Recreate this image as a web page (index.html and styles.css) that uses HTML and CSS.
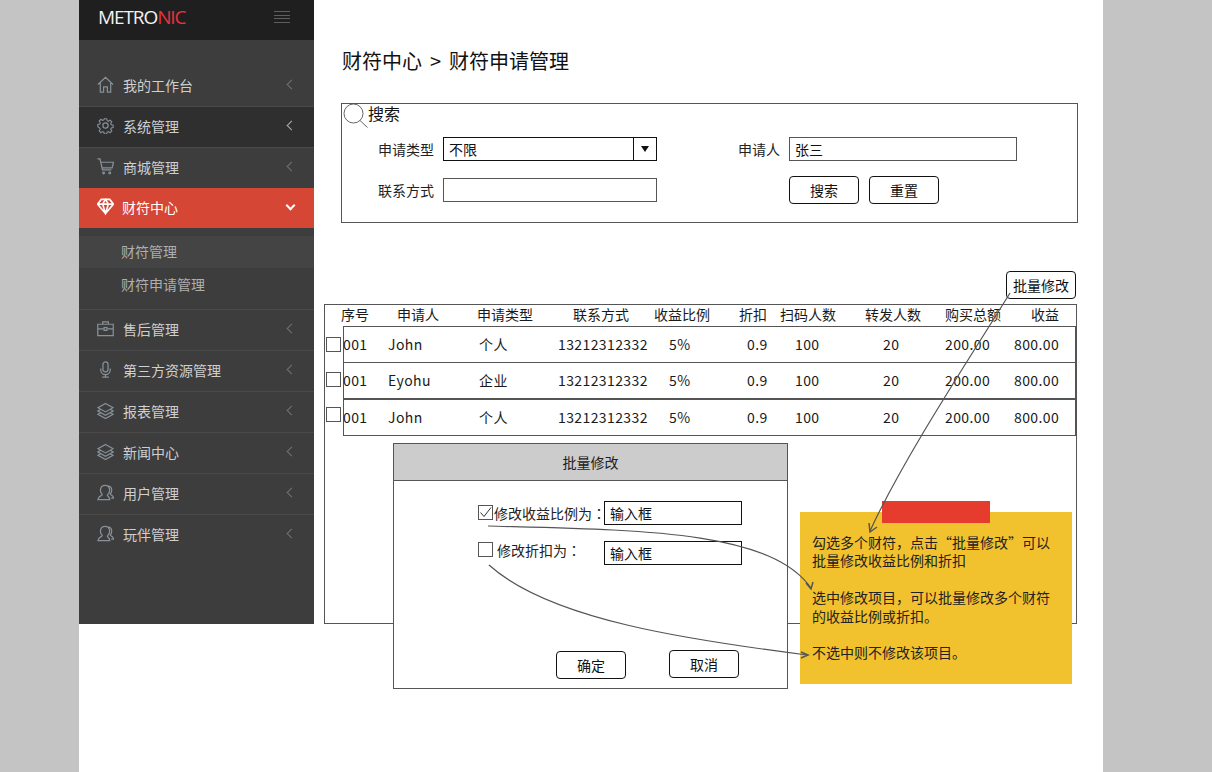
FILE: index.html
```html
<!DOCTYPE html>
<html>

<head>
    <title>财符申请管理</title>
    <meta charset="UTF-8" />
    <link rel="stylesheet" href="styles.css">
</head>

<body>
    <svg class="defs" width="0" height="0">
        <symbol id="i-home" viewBox="0 0 18 18"><path d="M1 9 9 1.500 17 9M3.500 7.500V17H7v-5.500h4V17h3.500V7.500"/></symbol>
        <symbol id="i-gear" viewBox="0 0 18 18"><circle cx="9" cy="9" r="2.800"/><path d="M7.600 1h2.800l.5 2.300 1.500.7 2-1.300 2 2-1.300 2 .7 1.500 2.200.5v2.800l-2.200.5-.7 1.500 1.300 2-2 2-2-1.300-1.500.7-.5 2.200H7.600l-.5-2.200-1.500-.7-2 1.300-2-2 1.300-2-.7-1.500L0 10.500V7.700l2.200-.5.7-1.500-1.300-2 2-2 2 1.300 1.500-.7z" transform="translate(.9 .9) scale(.9)"/></symbol>
        <symbol id="i-cart" viewBox="0 0 18 18"><path d="M.5 1h2.700l2.600 11.500h9.400M4 4.500h13.500l-1.500 6H5.300"/><circle cx="7" cy="15.800" r=".9"/><circle cx="13.500" cy="15.800" r=".9"/></symbol>
        <symbol id="i-gem" viewBox="0 0 18 18"><path d="M4.500 1.500h9L17.500 6.500 9 16.500.5 6.500zM.5 6.500h17M6 6.500 9 16.500 12 6.500 9 1.500z"/></symbol>
        <symbol id="i-case" viewBox="0 0 18 18"><path d="M.8 4.500h16.400v12H.8zM6 4.500V2h6v2.500M.8 9.500H7M11 9.500h6.200"/><rect x="7.500" y="8" width="3" height="3"/></symbol>
        <symbol id="i-mic" viewBox="0 0 18 18"><rect x="6.300" y="1" width="5.400" height="10.500" rx="2.700"/><path d="M4 8v1.500a5 5 0 0 0 10 0V8M9 14.500V17M5.500 17h7"/></symbol>
        <symbol id="i-layers" viewBox="0 0 18 18"><path d="M9 1.500 17 6 9 10.500 1 6zM3.500 8 1 9.500 9 14l8-4.500L14.500 8M3.500 11.500 1 13l8 4.500 8-4.500-2.500-1.500"/></symbol>
        <symbol id="i-user" viewBox="0 0 18 18"><path d="M11.500 11c3-3 2.500-9.500-3-9.500S2.500 8 5.500 11c0 1.500-4.500 2-4.500 5.500h12.500c0-3.500-4-4-2-5.500zM12 2c4 .5 4.500 6 2 8.500 0 1 3.500 2 3.500 4.500H15"/></symbol>
    </svg>

    <div class="page">
        <aside class="sidebar">
            <div class="brand">
                <span class="logo">METRO<em>NIC</em></span>
                <svg class="burger" width="16" height="14" viewBox="0 0 16 14"><path d="M0 1.500h16M0 5.500h16M0 8.500h16M0 12.500h16"/></svg>
            </div>
            <ul class="menu">
                <li class="item"><svg class="icon"><use href="#i-home"/></svg>我的工作台<i class="chev"></i></li>
                <li class="item item-dark"><svg class="icon"><use href="#i-gear"/></svg>系统管理<i class="chev chev-bright"></i></li>
                <li class="item item-flat"><svg class="icon"><use href="#i-cart"/></svg>商城管理<i class="chev"></i></li>
                <li class="item item-active"><svg class="icon"><use href="#i-gem"/></svg>财符中心<i class="chev chev-down"></i></li>
                <li class="sub">
                    <div class="sub-item sub-current">财符管理</div>
                    <div class="sub-item">财符申请管理</div>
                </li>
                <li class="item"><svg class="icon"><use href="#i-case"/></svg>售后管理<i class="chev"></i></li>
                <li class="item"><svg class="icon"><use href="#i-mic"/></svg>第三方资源管理<i class="chev"></i></li>
                <li class="item"><svg class="icon"><use href="#i-layers"/></svg>报表管理<i class="chev"></i></li>
                <li class="item"><svg class="icon"><use href="#i-layers"/></svg>新闻中心<i class="chev"></i></li>
                <li class="item"><svg class="icon"><use href="#i-user"/></svg>用户管理<i class="chev"></i></li>
                <li class="item item-flat"><svg class="icon"><use href="#i-user"/></svg>玩伴管理<i class="chev"></i></li>
            </ul>
        </aside>

        <main class="main">
            <h1>财符中心 &gt; 财符申请管理</h1>

            <section class="search">
                <div class="search-title">
                    <svg width="25" height="24" viewBox="0 0 25 24"><circle cx="10.500" cy="9.500" r="9.500"/><path d="M17 16.500 24.500 23.500"/></svg>
                    <span>搜索</span>
                </div>
                <div class="form-row">
                    <label class="label">申请类型</label>
                    <div class="field field-dark select">
                        <span>不限</span>
                        <b class="select-btn"></b>
                    </div>
                    <label class="label label-short">申请人</label>
                    <div class="field field-wide">张三</div>
                </div>
                <div class="form-row form-row-last">
                    <label class="label">联系方式</label>
                    <div class="field"></div>
                    <div class="actions">
                        <button class="btn">搜索</button>
                        <button class="btn">重置</button>
                    </div>
                </div>
            </section>

            <button class="btn btn-batch">批量修改</button>

            <section class="table">
                <div class="grid grid-head">
                    <span>序号</span><span>申请人</span><span>申请类型</span><span>联系方式</span><span>收益比例</span>
                    <span>折扣</span><span>扫码人数</span><span>转发人数</span><span>购买总额</span><span>收益</span>
                </div>
                <div class="row row-first">
                    <i class="check"></i>
                    <div class="grid grid-body">
                        <span>001</span><span>John</span><span>个人</span><span>13212312332</span><span>5%</span>
                        <span>0.9</span><span>100</span><span>20</span><span>200.00</span><span>800.00</span>
                    </div>
                </div>
                <div class="row row-second">
                    <i class="check"></i>
                    <div class="grid grid-body">
                        <span>001</span><span>Eyohu</span><span>企业</span><span>13212312332</span><span>5%</span>
                        <span>0.9</span><span>100</span><span>20</span><span>200.00</span><span>800.00</span>
                    </div>
                </div>
                <div class="row row-third">
                    <i class="check"></i>
                    <div class="grid grid-body">
                        <span>001</span><span>John</span><span>个人</span><span>13212312332</span><span>5%</span>
                        <span>0.9</span><span>100</span><span>20</span><span>200.00</span><span>800.00</span>
                    </div>
                </div>
            </section>
        </main>

        <!-- dialog and note sit over the table -->
        <div class="dialog">
            <div class="dialog-head">批量修改</div>
            <div class="dialog-body">
                <div class="dialog-row">
                    <i class="check check-on">
                        <svg width="13" height="13" viewBox="0 0 13 13"><path d="M1.500 6.500 5 10.500 12 1.500"/></svg>
                    </i>
                    <span class="dialog-label">修改收益比例为<span class="colon">：</span></span>
                    <div class="field field-dark field-input">输入框</div>
                </div>
                <div class="dialog-row dialog-row-off">
                    <i class="check"></i>
                    <span class="dialog-label">修改折扣为<span class="colon">：</span></span>
                    <div class="field field-dark field-input">输入框</div>
                </div>
                <div class="dialog-actions">
                    <button class="btn btn-ok">确定</button>
                    <button class="btn">取消</button>
                </div>
            </div>
        </div>

        <div class="note">
            <p>勾选多个财符，点击“批量修改”可以批量修改收益比例和折扣</p>
            <p>选中修改项目，可以批量修改多个财符的收益比例或折扣。</p>
            <p>不选中则不修改该项目。</p>
        </div>
        <div class="note-tag"></div>

        <svg class="arrows" width="1024" height="772" viewBox="79 0 1024 772">
            <path d="M1010 293C975 350 905 455 870 531"/>
            <path class="head" d="M869 523 870 532 877 527"/>
            <path d="M488 526C640 530 770 530 811 588"/>
            <path class="head" d="M806 583 811 589 813 582"/>
            <path d="M489 565C550 620 690 640 807 655"/>
            <path class="head" d="M801 652 808 655 801 658"/>
        </svg>
    </div>
</body>

</html>
```

FILE: styles.css
```css
* {
    box-sizing: border-box;
}

html,
body {
    margin: 0;
    padding: 0;
    height: 100%;
    overflow: hidden;
}

body {
    background-color: #c4c4c4;
    font-family: "Noto Sans CJK SC", "Open Sans", sans-serif;
    font-size: 14px;
    color: #222;
}

.defs {
    position: absolute;
}

.page {
    position: relative;
    display: flex;
    align-items: flex-start;
    width: 1024px;
    height: 772px;
    margin-left: 79px;
    background-color: #fff;
}

/* sidebar */
.sidebar {
    flex: none;
    width: 235px;
    height: 624px;
    background-color: #3d3d3d;
}

.brand {
    display: flex;
    justify-content: space-between;
    align-items: center;
    height: 40px;
    padding: 0 24px 6px 19px;
    background-color: #1f1f1f;
}

.logo {
    font-family: "Open Sans", sans-serif;
    font-size: 19px;
    letter-spacing: -1.1px;
    color: #f2f2f2;
}

.logo em {
    font-style: normal;
    color: #e8323c;
}

.burger path {
    fill: none;
    stroke: #5e5e5e;
}

.menu {
    list-style: none;
    margin: 26px 0 0;
    padding: 0;
}

.item {
    display: flex;
    align-items: center;
    height: 41px;
    padding: 0 19px 3px 18px;
    border-bottom: 1px solid #4a4a4a;
    color: #cfcfcf;
}

.item-dark {
    background-color: #2f2f2f;
}

.item-flat {
    height: 40px;
    border-bottom: none;
}

.item-active {
    height: 40px;
    border-bottom: none;
    background-color: #d64635;
    color: #fff;
}

.icon {
    flex: none;
    width: 17px;
    height: 17px;
    margin-right: 9px;
    fill: none;
    stroke: #87919a;
    stroke-width: 1.3;
}

.item-active .icon {
    margin-right: 8px;
    stroke: #fff;
    stroke-width: 1.7;
}

.chev {
    width: 7px;
    height: 7px;
    margin-left: auto;
    border-left: 1px solid #6d747a;
    border-bottom: 1px solid #6d747a;
    transform: rotate(45deg);
}

.chev-bright {
    border-color: #a9b0b6;
}

.chev-down {
    margin: -3px 1px 0 auto;
    border-width: 2px;
    border-color: #fff;
    transform: rotate(-45deg);
}

.sub {
    height: 82px;
    padding-top: 8px;
    border-bottom: 1px solid #4a4a4a;
    color: #aeaeae;
}

.sub-item {
    height: 33px;
    padding-left: 42px;
    line-height: 32px;
}

.sub-current {
    height: 32px;
    background-color: #444;
    line-height: 30px;
}

/* main */
.main {
    display: flex;
    flex-direction: column;
    flex: 1;
    min-width: 0;
}

h1 {
    margin: 46px 0 0 28px;
    font-size: 20px;
    font-weight: normal;
    line-height: 30px;
    word-spacing: 3.5px;
    color: #111;
}

.search {
    width: 737px;
    height: 120px;
    margin: 27px 0 0 27px;
    border: 1px solid #555;
}

.search-title {
    display: flex;
    height: 24px;
    padding-left: 1px;
    font-size: 16px;
    line-height: 19px;
    color: #111;
}

.search-title svg {
    flex: none;
    fill: none;
    stroke: #666;
}

.form-row {
    display: flex;
    align-items: center;
    height: 24px;
    margin-top: 9px;
    padding-left: 36px;
}

.form-row-last {
    margin-top: 17px;
}

.label {
    flex: none;
    width: 55px;
    margin-right: 10px;
    white-space: nowrap;
}

.label-short {
    width: 41px;
    margin-left: 81px;
}

.field {
    flex: none;
    width: 214px;
    height: 24px;
    padding-left: 5px;
    border: 1px solid #555;
    background-color: #fff;
    line-height: 23px;
    color: #111;
}

.field-dark {
    border-color: #111;
}

.field-wide {
    width: 228px;
}

.field-input {
    width: 138px;
}

.select {
    display: flex;
    justify-content: space-between;
    padding-right: 0;
}

.select-btn {
    position: relative;
    width: 23px;
    border-left: 1px solid #111;
}

.select-btn::after {
    content: "";
    position: absolute;
    top: 8px;
    left: 7px;
    border: 4px solid transparent;
    border-top: 6px solid #111;
    border-bottom: none;
}

.actions {
    display: flex;
    gap: 10px;
    margin-left: 132px;
}

.btn {
    width: 70px;
    height: 28px;
    padding: 0;
    border: 1px solid #111;
    border-radius: 4px;
    background-color: #fff;
    font-family: inherit;
    font-size: 14px;
    color: #111;
}

.btn-batch {
    margin: 48px 0 0 692px;
}

/* table */
.table {
    width: 753px;
    height: 320px;
    margin: 5px 0 0 10px;
    padding-left: 1px;
    border: 1px solid #555;
}

.grid {
    display: grid;
    align-items: center;
    white-space: nowrap;
    color: #1a1a1a;
}

.grid-head {
    grid-template-columns: 56px 80px 96px 81px 85px 41px 85px 80px 86px 40px;
    height: 21px;
    margin-left: 15px;
    padding-bottom: 5px;
    line-height: 18px;
}

.grid-body {
    grid-template-columns: 45px 91px 79px 111px 78px 48px 88px 62px 69px 1fr;
    flex: 1;
    min-width: 0;
    height: 37px;
    margin-left: 2px;
    padding-bottom: 2px;
    border: 1px solid #555;
    letter-spacing: 0.4px;
}

.grid-body span {
    margin-left: -1px;
}

.row {
    display: flex;
}

.row-second {
    margin-top: -1px;
}

.row-first .check {
    margin-top: 11px;
}

.row-third .grid-body {
    height: 38px;
    margin-top: -1px;
    border-top-width: 2px;
}

.row-third .check {
    margin-top: 8px;
}

.check {
    flex: none;
    display: block;
    width: 15px;
    height: 15px;
    margin-top: 10px;
    border: 1px solid #555;
    background-color: #fff;
}

/* dialog */
.dialog {
    position: absolute;
    left: 314px;
    top: 443px;
    width: 395px;
    height: 246px;
    border: 1px solid #555;
    background-color: #fff;
}

.dialog-head {
    height: 37px;
    border-bottom: 1px solid #555;
    background-color: #ccc;
    line-height: 36px;
    text-align: center;
    color: #222;
}

.dialog-body {
    padding: 20px 0 0 84px;
}

.dialog-row {
    display: flex;
    align-items: center;
    margin-bottom: 16px;
    white-space: nowrap;
}

.dialog-row .check {
    margin-top: -2px;
}

.dialog-row-off .check {
    margin-top: -8px;
}

.check-on svg {
    display: block;
    fill: none;
    stroke: #333;
}

.dialog-label {
    width: 110px;
    margin-left: 1px;
    color: #222;
}

.colon {
    font-family: "Noto Sans CJK TC", sans-serif;
}

.dialog-row-off .dialog-label {
    margin-top: -6px;
    padding-left: 3px;
}

.dialog-actions {
    display: flex;
    align-items: flex-start;
    gap: 43px;
    margin: 85px 0 0 78px;
}

.btn-ok {
    margin-top: 1px;
}

/* sticky note */
.note {
    position: absolute;
    left: 721px;
    top: 512px;
    width: 272px;
    height: 172px;
    padding: 21px 18px 0 12px;
    background-color: #f2c12e;
    font-size: 14px;
    line-height: 18.400px;
    color: #222;
}

.note p {
    margin: 0 0 18.400px;
}

.note-tag {
    position: absolute;
    left: 803px;
    top: 501px;
    width: 108px;
    height: 22px;
    background-color: #e53c2e;
}

.arrows {
    position: absolute;
    left: 0;
    top: 0;
    pointer-events: none;
}

.arrows path {
    fill: none;
    stroke: #555;
    stroke-width: 1.200;
}

.arrows .head {
    stroke-width: 1.500;
}
```
